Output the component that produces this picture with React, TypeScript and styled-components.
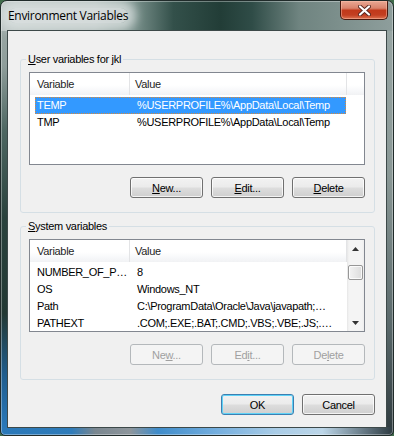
import React from 'react';
import styled, { createGlobalStyle } from 'styled-components';

type EnvVar = {
    name: string
    value: string
}

const userVars: EnvVar[] = [
    {name: 'TEMP', value: '%USERPROFILE%\\AppData\\Local\\Temp'},
    {name: 'TMP', value: '%USERPROFILE%\\AppData\\Local\\Temp'},
];

const systemVars: EnvVar[] = [
    {name: 'NUMBER_OF_P…', value: '8'},
    {name: 'OS', value: 'Windows_NT'},
    {name: 'Path', value: 'C:\\ProgramData\\Oracle\\Java\\javapath;…'},
    {name: 'PATHEXT', value: '.COM;.EXE;.BAT;.CMD;.VBS;.VBE;.JS;.…'},
];

const GlobalStyle = createGlobalStyle`
  html, body {
    margin: 0;
    padding: 0;
    background: #3f6b4a;
  }
  body {
    width: 394px;
    height: 436px;
    overflow: hidden;
  }
`;

const UI_FONT = `"Liberation Sans", Arial, sans-serif`;

const Window = styled.div`
  box-sizing: border-box;
  width: 394px;
  height: 436px;
  display: flex;
  flex-direction: column;
  border: 1px solid #202b2a;
  border-radius: 7px 7px 5px 5px;
  overflow: hidden;
  font-family: ${UI_FONT};
  font-size: 11px;
  letter-spacing: -0.3px;
  color: #000;
  box-shadow: inset 0 0 0 1px rgba(255, 255, 255, 0.35);
  background:
    linear-gradient(90deg, #bcc5c4 0%, #aab6b4 24%, #7a918c 34%, #33504a 44%, #223d37 56%, #2f4c47 64%, #6f8480 76%, #8e9e9c 100%) top / 100% 30px no-repeat,
    linear-gradient(90deg, #2a78b8 0%, #2f7cba 18%, #7a8790 24%, #8e969c 33%, #3f8cca 40%, #74aede 55%, #a9cce6 70%, #bcd6e8 82%, #5b6d78 94%, #2c3a40 100%) bottom / 100% 8px no-repeat,
    linear-gradient(180deg, #a2aeac 0%, #8e9d9a 15%, #4d6661 30%, #2a423d 50%, #223833 72%, #1f5c8c 86%, #2a7cc0 100%) left / 7px 100% no-repeat,
    linear-gradient(180deg, #9aa8a6 0%, #8a9896 40%, #59686a 75%, #2e3a3e 100%) right / 7px 100% no-repeat;
`;

const TitleBar = styled.div`
  height: 29px;
  flex: none;
  display: flex;
  align-items: flex-start;
  padding: 0 5px 0 7px;
`;

const Title = styled.span`
  margin-top: 7px;
  font-family: "Open Sans", "Liberation Sans", sans-serif;
  font-size: 12px;
  line-height: 15px;
  letter-spacing: -0.3px;
  color: #000;
  border-radius: 12px;
  background: rgba(222, 228, 227, 0.8);
  box-shadow: 0 0 10px 8px rgba(222, 228, 227, 0.75);
`;

const CloseButton = styled.div`
  margin-left: auto;
  width: 48px;
  height: 19px;
  box-sizing: border-box;
  display: flex;
  align-items: center;
  justify-content: center;
  border: 1px solid #4a1a10;
  border-top: none;
  border-radius: 0 0 5px 5px;
  background: linear-gradient(180deg, #e9a894 0%, #d9836c 40%, #c1391b 52%, #c33f21 78%, #dc7352 100%);
  box-shadow: inset 0 0 0 1px rgba(255, 200, 180, 0.45);
`;

const Client = styled.div`
  flex: 1;
  margin: 0 6px 7px 6px;
  border: 1px solid #3d4949;
  background: #f0f0f0;
  display: flex;
  flex-direction: column;
  padding: 0 11px 0 12px;
`;

const Group = styled.fieldset<{$top: number}>`
  margin: ${props => props.$top}px 0 0;
  padding: 0;
  border: 1px solid #d5dfe5;
  border-radius: 3px;
  min-width: 0;
`;

const Legend = styled.legend`
  margin-left: 5px;
  padding: 0 2px;
  font-size: 11px;
  line-height: 13px;
`;

const GroupBody = styled.div`
  padding: 6px 9px 14px 8px;
`;

const ListView = styled.div`
  height: 93px;
  box-sizing: border-box;
  border: 1px solid #828790;
  background: #fff;
  display: flex;
  overflow: hidden;
`;

const ListContent = styled.div`
  flex: 1;
  min-width: 0;
`;

const Header = styled.div`
  height: 22px;
  display: flex;
  background: linear-gradient(180deg, #ffffff 0%, #ffffff 55%, #f7f8fa 80%, #f1f2f4 100%);
`;

const HeaderCell = styled.div<{$w?: number, $pad: number}>`
  box-sizing: border-box;
  width: ${props => props.$w ? props.$w + 'px' : 'auto'};
  flex: ${props => props.$w ? 'none' : '1'};
  padding-left: ${props => props.$pad}px;
  line-height: 22px;
  color: #1e1e1e;
  border-right: ${props => props.$w ? '1px solid #e3e4e6' : 'none'};
`;

const Rows = styled.div`
  padding: 2px 0 0 5px;
`;

const Row = styled.div<{$selected?: boolean}>`
  width: 311px;
  height: 17px;
  display: flex;
  line-height: 17px;
  white-space: nowrap;
  background: ${props => props.$selected ? '#3399ff' : 'transparent'};
  color: ${props => props.$selected ? '#fff' : '#000'};
  outline: ${props => props.$selected ? '1px dotted #d98a3c' : 'none'};
  outline-offset: -1px;
`;

const NameCell = styled.div`
  width: 96px;
  flex: none;
  padding-left: 2px;
  box-sizing: border-box;
`;

const ValueCell = styled.div`
  flex: 1;
  padding-left: 6px;
  overflow: hidden;
`;

const ScrollBar = styled.div`
  width: 17px;
  flex: none;
  display: flex;
  flex-direction: column;
  background: linear-gradient(90deg, #e6e6e6 0px, #f4f4f4 2px, #f4f4f4 15px, #ededed 17px);
`;

const ScrollArrow = styled.div`
  height: 17px;
  display: flex;
  align-items: center;
  justify-content: center;
`;

const ScrollTrack = styled.div`
  flex: 1;
  padding: 8px 1px 0;
`;

const Thumb = styled.div`
  height: 15px;
  box-sizing: border-box;
  border: 1px solid #979797;
  border-radius: 2px;
  background: linear-gradient(90deg, #f3f3f3 0%, #e8e8e8 50%, #dcdcdc 100%);
  box-shadow: inset 0 0 0 1px rgba(255, 255, 255, 0.8);
`;

const ButtonRow = styled.div`
  display: flex;
  justify-content: flex-end;
  gap: 8px;
  margin-top: 12px;
`;

const DialogButtons = styled.div`
  display: flex;
  justify-content: flex-end;
  gap: 8px;
  margin-top: 14px;
`;

const Button = styled.button<{$default?: boolean}>`
  width: 73px;
  height: 21px;
  box-sizing: border-box;
  padding: 0;
  border: 1px solid ${props => props.$default ? '#3c7fb1' : '#707070'};
  border-radius: 3px;
  background: linear-gradient(180deg, #f2f2f2 0%, #ebebeb 48%, #dddddd 52%, #cfcfcf 100%);
  box-shadow: inset 0 0 0 1px ${props => props.$default ? '#5fd2f7' : 'rgba(255, 255, 255, 0.75)'};
  font-family: ${UI_FONT};
  font-size: 11px;
  letter-spacing: -0.3px;
  color: #000;

  &:disabled {
    border-color: #b4b8bb;
    background: #f4f4f4;
    box-shadow: none;
    color: #a0a0a0;
  }
`;

const CloseGlyph = () => (
    <svg width="13" height="11" viewBox="0 0 13 11">
        <path d="M2 1.5 L11 9.5 M11 1.5 L2 9.5" stroke="#5a2a22" strokeWidth="4" strokeLinecap="round"/>
        <path d="M2 1.5 L11 9.5 M11 1.5 L2 9.5" stroke="#ffffff" strokeWidth="2.2" strokeLinecap="round"/>
    </svg>
);

const Arrow = (props: {up?: boolean}) => (
    <svg width="7" height="4" viewBox="0 0 7 4">
        <path d={props.up ? 'M0 4 L3.5 0 L7 4 Z' : 'M0 0 L3.5 4 L7 0 Z'} fill="#333"/>
    </svg>
);

const VarList = (props: {vars: EnvVar[], selected?: number, scroll?: boolean}) => (
    <ListView>
        <ListContent>
            <Header>
                <HeaderCell $w={100} $pad={7}>Variable</HeaderCell>
                <HeaderCell $w={217} $pad={5}>Value</HeaderCell>
                <HeaderCell $pad={0}/>
            </Header>
            <Rows>
                {props.vars.map((v, i) =>
                    <Row key={v.name} $selected={i === props.selected}>
                        <NameCell>{v.name}</NameCell>
                        <ValueCell>{v.value}</ValueCell>
                    </Row>
                )}
            </Rows>
        </ListContent>
        {props.scroll &&
            <ScrollBar>
                <ScrollArrow><Arrow up/></ScrollArrow>
                <ScrollTrack><Thumb/></ScrollTrack>
                <ScrollArrow><Arrow/></ScrollArrow>
            </ScrollBar>}
    </ListView>
);

export default function App() {
    return (
        <>
            <GlobalStyle/>
            <Window>
                <TitleBar>
                    <Title>Environment Variables</Title>
                    <CloseButton><CloseGlyph/></CloseButton>
                </TitleBar>
                <Client>
                    <Group $top={22}>
                        <Legend><u>U</u>ser variables for jkl</Legend>
                        <GroupBody>
                            <VarList vars={userVars} selected={0}/>
                            <ButtonRow>
                                <Button><u>N</u>ew...</Button>
                                <Button><u>E</u>dit...</Button>
                                <Button><u>D</u>elete</Button>
                            </ButtonRow>
                        </GroupBody>
                    </Group>
                    <Group $top={7}>
                        <Legend><u>S</u>ystem variables</Legend>
                        <GroupBody>
                            <VarList vars={systemVars} scroll/>
                            <ButtonRow>
                                <Button disabled>Ne<u>w</u>...</Button>
                                <Button disabled>Ed<u>i</u>t...</Button>
                                <Button disabled>De<u>l</u>ete</Button>
                            </ButtonRow>
                        </GroupBody>
                    </Group>
                    <DialogButtons>
                        <Button $default>OK</Button>
                        <Button>Cancel</Button>
                    </DialogButtons>
                </Client>
            </Window>
        </>
    );
}
